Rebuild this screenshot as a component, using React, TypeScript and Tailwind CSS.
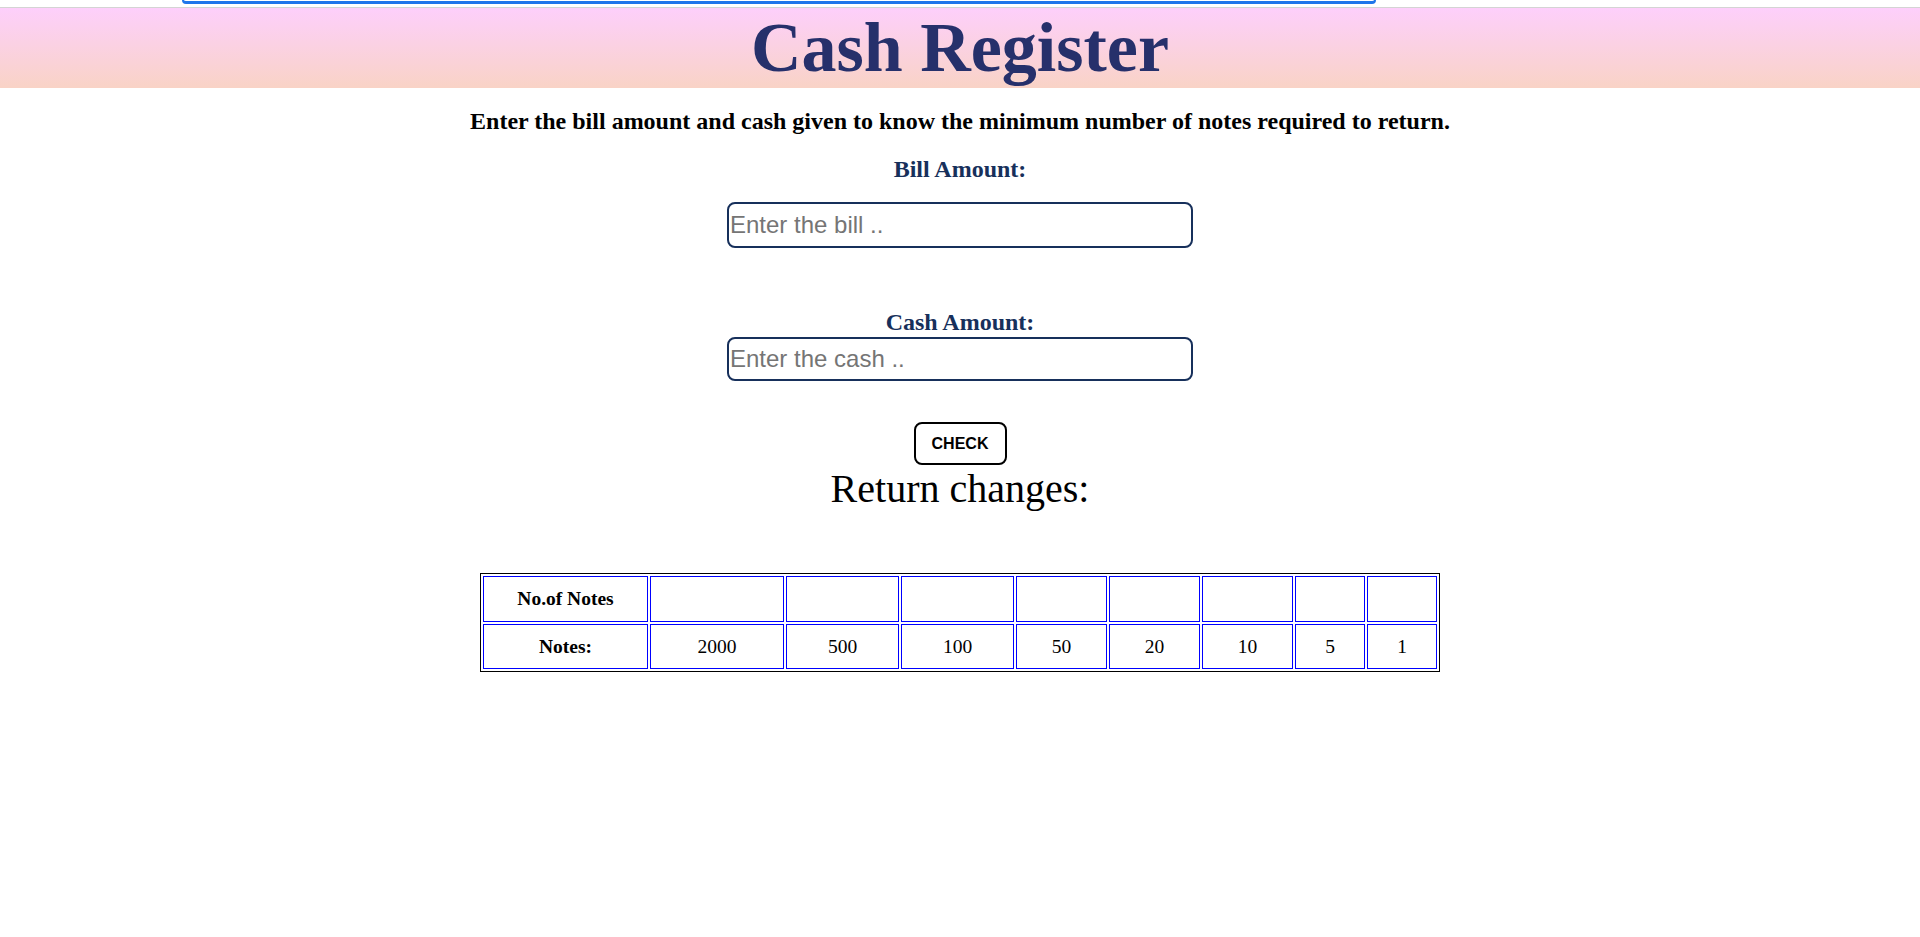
const notes = [2000, 500, 100, 50, 20, 10, 5, 1];
const colWidths = ["w-[134px]", "w-[113px]", "w-[113px]", "w-[91px]", "w-[91px]", "w-[91px]", "w-[70px]", "w-[70px]"];

export default function App() {
  return (
    <div className="min-h-screen bg-white font-['Liberation_Serif',serif] text-black">
      {/* bottom of the box scrolled above the header */}
      <div className="h-[7px]">
        <div className="ml-[182px] h-[4px] w-[1194px] rounded-b-[7px] border-x-2 border-b-[3px] border-t-0 border-[#1f75eb]" />
      </div>

      <header className="h-[81px] border-t border-[#d4d4d4] bg-linear-to-b from-[#fdcffb] to-[#f9d3c6]">
        <h1 className="text-center text-[70px] font-bold leading-[80px] text-[#26306b]">Cash Register</h1>
      </header>

      <main className="flex flex-col items-center">
        <p className="mt-[19px] text-[24px] font-bold leading-[28px]">
          Enter the bill amount and cash given to know the minimum number of notes required to return.
        </p>

        <label className="mt-[20px] text-[24px] font-bold leading-[28px] text-[#17305b]">Bill Amount:</label>
        <input
          type="number"
          placeholder="Enter the bill .."
          className="mt-[19px] h-[46px] w-[466px] rounded-[8px] border-2 border-[#17305b] px-px font-['Liberation_Sans',sans-serif] text-[24px] outline-none placeholder:text-[#757575]"
        />

        <label className="mt-[60px] text-[24px] font-bold leading-[28px] text-[#17305b]">Cash Amount:</label>
        <input
          type="number"
          placeholder="Enter the cash .."
          className="mt-px h-[44px] w-[466px] rounded-[8px] border-2 border-[#17305b] px-px font-['Liberation_Sans',sans-serif] text-[24px] outline-none placeholder:text-[#757575]"
        />

        <button
          type="button"
          className="mt-[41px] h-[43px] w-[93px] rounded-[8px] border-2 border-black bg-white font-['Liberation_Sans',sans-serif] text-[16px] font-bold"
        >
          CHECK
        </button>

        <h2 className="mt-px text-[40px] leading-[46px]">Return changes:</h2>

        <table className="mt-[61px] w-[960px] table-fixed border-separate border-spacing-[2px] border border-black text-[19.5px]">
          <tbody>
            <tr>
              <th className="h-[46px] w-[165px] border border-[#0000ff] font-bold">No.of Notes</th>
              {colWidths.map((w, i) => (
                <td key={i} className={`h-[46px] border border-[#0000ff] ${w}`} />
              ))}
            </tr>
            <tr>
              <th className="h-[45px] border border-[#0000ff] font-bold">Notes:</th>
              {notes.map((n) => (
                <td key={n} className="h-[45px] border border-[#0000ff] text-center">
                  {n}
                </td>
              ))}
            </tr>
          </tbody>
        </table>
      </main>
    </div>
  );
}
